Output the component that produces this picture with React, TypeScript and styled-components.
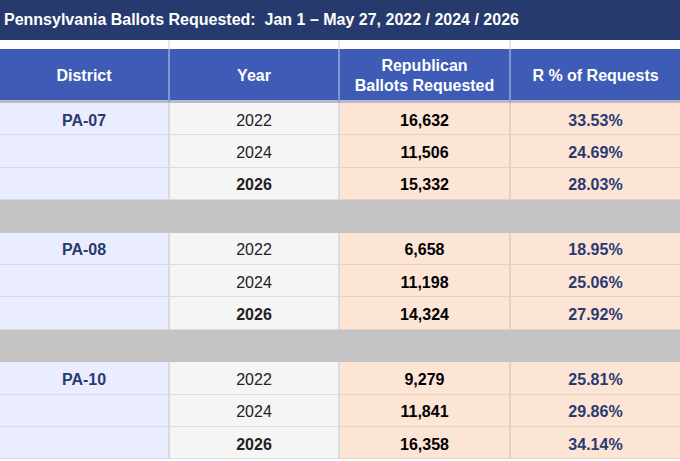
import React from "react";
import styled, { createGlobalStyle } from "styled-components";

const Global = createGlobalStyle`
  html, body { margin: 0; padding: 0; background: #ffffff; }
  body { font-family: "Liberation Sans", Arial, sans-serif; }
`;

const Page = styled.div`
  width: 680px;
  height: 461px;
  overflow: hidden;
  background: #ffffff;
  display: flex;
  flex-direction: column;
`;

const TitleBar = styled.div`
  height: 40px;
  background: #263a6e;
  color: #ffffff;
  font-weight: 700;
  font-size: 16px;
  display: flex;
  align-items: center;
  padding-left: 4px;
  padding-bottom: 1px;
  box-sizing: border-box;
  white-space: pre;
  flex-shrink: 0;
`;

const Grid = styled.div`
  display: grid;
  grid-template-columns: 170px 170px 171px 169px;
`;

const GapCell = styled.div<{ $last?: boolean }>`
  height: 9px;
  background: #ffffff;
  border-right: ${(p) => (p.$last ? "none" : "2px solid #e6e8ee")};
`;

const HeadCell = styled.div<{ $last?: boolean }>`
  box-sizing: border-box;
  height: 54px;
  padding-top: 3px;
  background: #3e5cb6;
  color: #ffffff;
  font-weight: 700;
  font-size: 16px;
  line-height: 20px;
  display: flex;
  align-items: center;
  justify-content: center;
  text-align: center;
  border-right: ${(p) => (p.$last ? "none" : "2px solid #8194d3")};
  border-bottom: 3px solid #b9bcc8;
`;

type Kind = "district" | "year" | "ballots" | "pct";

const bg: Record<Kind, string> = {
  district: "#e9edfd",
  year: "#f5f5f5",
  ballots: "#fde5d6",
  pct: "#fde5d6",
};

const line: Record<Kind, string> = {
  district: "#d6d9e6",
  year: "#dcdcdc",
  ballots: "#e6d0c3",
  pct: "#e6d0c3",
};

const Cell = styled.div<{ $kind: Kind; $bold?: boolean; $last?: boolean }>`
  box-sizing: border-box;
  height: 32.4px;
  padding-top: 4px;
  background: ${(p) => bg[p.$kind]};
  border-bottom: 1px solid ${(p) => line[p.$kind]};
  border-right: ${(p) => (p.$last ? "none" : `2px solid ${line[p.$kind]}`)};
  display: flex;
  align-items: center;
  justify-content: center;
  font-size: 16px;
  font-weight: ${(p) => (p.$bold ? 700 : 400)};
  color: ${(p) =>
    p.$kind === "district" || p.$kind === "pct"
      ? "#2a3a70"
      : p.$kind === "ballots"
      ? "#000000"
      : "#222222"};
`;

const Spacer = styled.div`
  grid-column: 1 / -1;
  height: 32.4px;
  background: #c4c4c4;
`;

type Row = { year: string; ballots: string; pct: string };
type Group = { district: string; rows: Row[] };

const groups: Group[] = [
  {
    district: "PA-07",
    rows: [
      { year: "2022", ballots: "16,632", pct: "33.53%" },
      { year: "2024", ballots: "11,506", pct: "24.69%" },
      { year: "2026", ballots: "15,332", pct: "28.03%" },
    ],
  },
  {
    district: "PA-08",
    rows: [
      { year: "2022", ballots: "6,658", pct: "18.95%" },
      { year: "2024", ballots: "11,198", pct: "25.06%" },
      { year: "2026", ballots: "14,324", pct: "27.92%" },
    ],
  },
  {
    district: "PA-10",
    rows: [
      { year: "2022", ballots: "9,279", pct: "25.81%" },
      { year: "2024", ballots: "11,841", pct: "29.86%" },
      { year: "2026", ballots: "16,358", pct: "34.14%" },
    ],
  },
];

export default function App() {
  return (
    <Page>
      <Global />
      <TitleBar>{"Pennsylvania Ballots Requested:  Jan 1 – May 27, 2022 / 2024 / 2026"}</TitleBar>
      <Grid>
        <GapCell />
        <GapCell />
        <GapCell />
        <GapCell $last />
        <HeadCell>District</HeadCell>
        <HeadCell>Year</HeadCell>
        <HeadCell>
          Republican
          <br />
          Ballots Requested
        </HeadCell>
        <HeadCell $last>R % of Requests</HeadCell>
        {groups.map((g, gi) => (
          <React.Fragment key={g.district}>
            {gi > 0 && <Spacer />}
            {g.rows.map((r, ri) => (
              <React.Fragment key={r.year}>
                <Cell $kind="district" $bold>
                  {ri === 0 ? g.district : ""}
                </Cell>
                <Cell $kind="year" $bold={r.year === "2026"}>
                  {r.year}
                </Cell>
                <Cell $kind="ballots" $bold>
                  {r.ballots}
                </Cell>
                <Cell $kind="pct" $bold $last>
                  {r.pct}
                </Cell>
              </React.Fragment>
            ))}
          </React.Fragment>
        ))}
      </Grid>
    </Page>
  );
}
